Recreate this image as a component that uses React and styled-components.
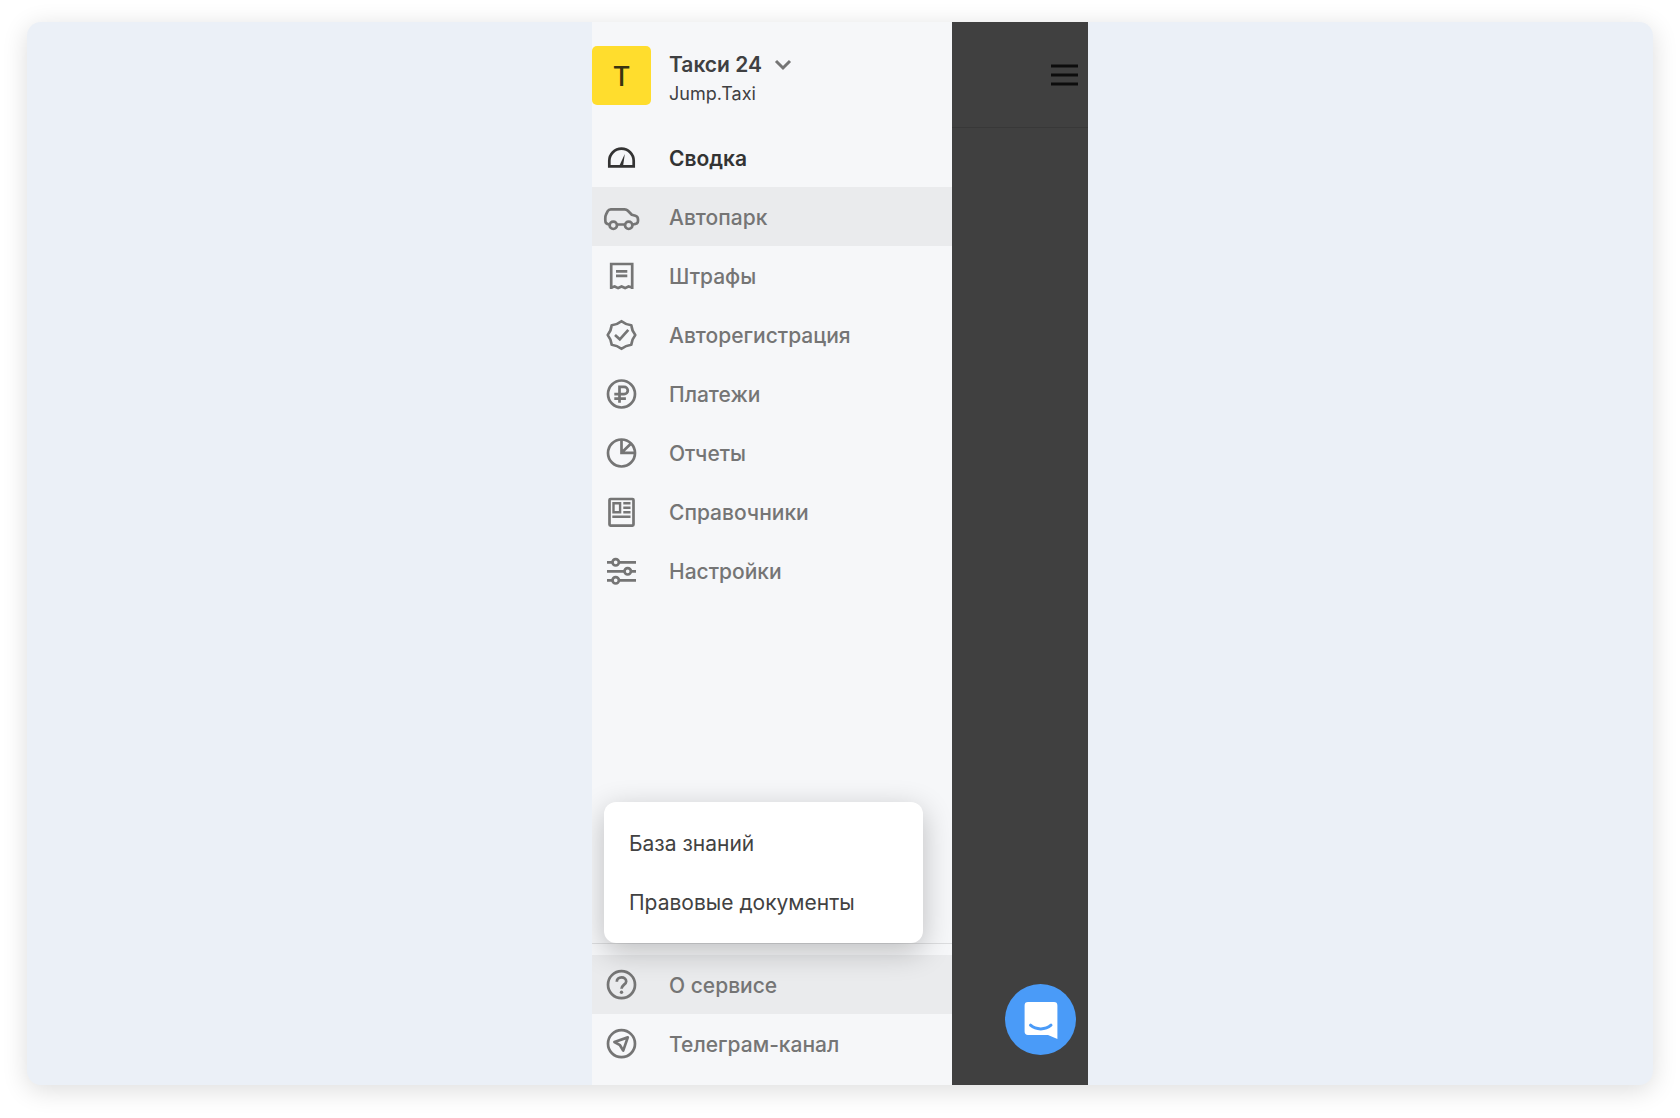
import React from 'react';
import styled, { createGlobalStyle } from 'styled-components';

const GlobalStyle = createGlobalStyle`
  * {
    box-sizing: border-box;
  }
  body {
    background: #fff;
    color: #3f4042;
    font-family: Inter, "Liberation Sans", sans-serif;
    margin: 0;
  }
  button {
    background: none;
    border: 0;
    color: inherit;
    cursor: pointer;
    font: inherit;
    padding: 0;
  }
`;

const Page = styled.div`
  display: flex;
  min-height: 100vh;
  padding: 22px 27px 33px;
`;

const Card = styled.div`
  background: #ebf0f7;
  border-radius: 14px;
  box-shadow: 0 5px 26px rgba(0, 0, 0, 0.14);
  display: flex;
  flex-grow: 1;
  justify-content: center;
`;

const Phone = styled.div`
  display: flex;
  flex-basis: 496px;
`;

const Sidebar = styled.aside`
  background: #f6f7f9;
  display: flex;
  flex: 0 0 360px;
  flex-direction: column;
  overflow: hidden;
`;

const Account = styled.header`
  display: flex;
  gap: 18px;
  padding: 24px 0 23px;
`;

const Avatar = styled.div`
  align-items: center;
  background: #ffdd2d;
  border-radius: 5px;
  color: #39330f;
  display: flex;
  font-size: 27px;
  font-weight: 500;
  height: 59px;
  justify-content: center;
  padding-top: 2px;
  width: 59px;
`;

const AccountInfo = styled.div`
  display: flex;
  flex-direction: column;
  gap: 4px;
  padding-top: 5px;
`;

const AccountSwitch = styled.button`
  align-items: center;
  display: flex;
  font-size: 21px;
  font-weight: 600;
  gap: 12px;
  line-height: 28px;
`;

const AccountProduct = styled.div`
  font-size: 18px;
  line-height: 22px;
`;

const Nav = styled.nav`
  display: flex;
  flex-direction: column;
`;

const Footer = styled.div`
  border-top: 1px solid #dcdddf;
  margin-top: auto;
  padding: 11px 0 12px;
  position: relative;
`;

const NavItem = styled.a`
  align-items: center;
  background: ${({ $highlighted }) => ($highlighted ? '#eaebed' : 'transparent')};
  color: ${({ $active }) => ($active ? '#333' : '#757575')};
  display: flex;
  font-size: 21px;
  font-weight: ${({ $active }) => ($active ? 600 : 500)};
  gap: 18px;
  height: 59px;
  text-decoration: none;

  span {
    line-height: 28px;
    padding-top: 2px;
  }
`;

const NavIcon = styled.svg`
  fill: none;
  height: 59px;
  stroke: currentColor;
  stroke-width: 2.7;
  width: 59px;
`;

const Popup = styled.div`
  background: #fff;
  border-radius: 12px;
  bottom: 142px;
  box-shadow: 0 8px 30px rgba(0, 0, 0, 0.24);
  display: flex;
  flex-direction: column;
  left: 12px;
  padding: 12px 0 11px;
  position: absolute;
  width: 319px;
`;

const PopupLink = styled.a`
  color: #424242;
  font-size: 21px;
  line-height: 59px;
  padding: 0 25px;
  text-decoration: none;
`;

const Backdrop = styled.main`
  background: #404040;
  display: flex;
  flex-direction: column;
  flex-grow: 1;
  justify-content: space-between;
`;

const TopBar = styled.div`
  align-items: center;
  border-bottom: 1px solid #383838;
  display: flex;
  height: 106px;
  justify-content: flex-end;
  padding-right: 10px;
`;

const MenuButton = styled.button`
  display: flex;
`;

const ChatButton = styled.button`
  align-self: flex-end;
  background: #4a9bf8;
  border-radius: 50%;
  display: flex;
  height: 71px;
  margin: 0 12px 30px;
  width: 71px;
`;

// eight-lobed badge outline
const polar = (step, r) => {
  const angle = (step * Math.PI) / 8;
  return `${29.5 + r * Math.sin(angle)} ${30 - r * Math.cos(angle)}`;
};
const badge = [1, 3, 5, 7, 9, 11, 13, 15]
  .map(step => `Q${polar(step, 11.2)} ${polar(step + 1, 13.8)}`)
  .join('');

const icons = {
  summary: (
    <>
      <path d="M17.3 38.4v-5.6a12.2 12.2 0 0 1 24.4 0v5.6z" />
      <path d="M32.8 26 31 38.5h-4z" fill="currentColor" stroke="none" />
    </>
  ),
  cars: (
    <>
      <path d="M17.3 37.5c-2.6-.3-4-1.7-4-4v-2.3c0-1.5.2-2.6.9-4l1.5-3c.7-1.3 1.6-1.9 3.1-1.9h13.8c1.4 0 2.3.4 3.3 1.4l3.9 4 3.6 1c1.8.5 2.6 1.8 2.6 3.7v1.7c0 2.100-1.300 3.200-5.200 3.400M25.300 37.500h7.600" strokeLinejoin="round" />
      <circle cx="21.3" cy="38.3" r="3.7" />
      <circle cx="36.7" cy="38.3" r="3.7" />
    </>
  ),
  fines: (
    <>
      <path d="M19.2 43V18h21v25M19.2 41.5l3.5-1 3.4 1.6 3.5-1.6 3.5 1.6 3.4-1.6 3.7 1" />
      <path d="M24 25.3h11.3M24 29.8h11.3" />
    </>
  ),
  registration: (
    <>
      <path d={`M${polar(0, 13.8)}${badge}z`} strokeLinejoin="round" />
      <path d="m23 30 4.8 4.3 8.5-9.5" />
    </>
  ),
  payments: (
    <>
      <circle cx="29.5" cy="30" r="13.5" />
      <path d="M27.5 38.8v-16h4.6a3.7 3.7 0 0 1 0 7.4h-9.8M22.3 34.6h11.6" />
    </>
  ),
  reports: (
    <>
      <circle cx="29.5" cy="30" r="13.5" />
      <path d="M29.5 17v12.8h13M30 29.3l8.8-8.6" />
    </>
  ),
  directories: (
    <>
      <rect x="17.5" y="17" width="24" height="26.6" rx="1" />
      <path d="M21.5 21.2h6.6v9h-6.6zM31.3 21.2h7.2M31.3 25.7h7.2M31.3 30.3h7.2M20.3 34.8h18.2" strokeWidth="2.4" />
    </>
  ),
  settings: (
    <>
      <path d="M15 21.3h5.5M27 21.3h17M15 30.3h17.5M39 30.3h5M15 39.3h5.5M27 39.3h17" />
      <circle cx="23.7" cy="21.3" r="3.2" />
      <circle cx="35.7" cy="30.3" r="3.2" />
      <circle cx="23.7" cy="39.3" r="3.2" />
    </>
  ),
  about: (
    <>
      <circle cx="29.5" cy="29.7" r="13.5" />
      <path d="M24.8 26.7c0-2.6 2-4.3 4.7-4.3s4.7 1.6 4.7 4c0 3-4.7 3.6-4.7 7.4" />
      <circle cx="29.5" cy="37.3" r="1.7" fill="currentColor" stroke="none" />
    </>
  ),
  telegram: (
    <>
      <circle cx="29.5" cy="29.7" r="13.5" />
      <path d="m22.4 28 13.4-4.6-4.6 13.2-3.2-5.4z" strokeLinejoin="round" />
    </>
  ),
};

const menu = [
  { icon: 'summary', title: 'Сводка', active: true },
  { icon: 'cars', title: 'Автопарк', highlighted: true },
  { icon: 'fines', title: 'Штрафы' },
  { icon: 'registration', title: 'Авторегистрация' },
  { icon: 'payments', title: 'Платежи' },
  { icon: 'reports', title: 'Отчеты' },
  { icon: 'directories', title: 'Справочники' },
  { icon: 'settings', title: 'Настройки' },
];

const footerMenu = [
  { icon: 'about', title: 'О сервисе', highlighted: true },
  { icon: 'telegram', title: 'Телеграм-канал' },
];

const MenuItem = ({ icon, title, active, highlighted }) => (
  <NavItem href={`#${icon}`} $active={active} $highlighted={highlighted}>
    <NavIcon viewBox="0 0 59 59" aria-hidden="true">{icons[icon]}</NavIcon>
    <span>{title}</span>
  </NavItem>
);

const App = () => (
  <Page>
    <GlobalStyle />
    <Card>
      <Phone>
        <Sidebar>
          <Account>
            <Avatar>Т</Avatar>
            <AccountInfo>
              <AccountSwitch type="button">
                Такси 24
                <svg width="18" height="12" viewBox="0 0 18 12" fill="none" stroke="#757575" strokeWidth="3" aria-hidden="true">
                  <path d="m2 2 7 7 7-7" />
                </svg>
              </AccountSwitch>
              <AccountProduct>Jump.Taxi</AccountProduct>
            </AccountInfo>
          </Account>
          <Nav>
            {menu.map(item => <MenuItem key={item.icon} {...item} />)}
          </Nav>
          <Footer>
            <Popup>
              <PopupLink href="#knowledge">База знаний</PopupLink>
              <PopupLink href="#legal">Правовые документы</PopupLink>
            </Popup>
            <Nav>
              {footerMenu.map(item => <MenuItem key={item.icon} {...item} />)}
            </Nav>
          </Footer>
        </Sidebar>
        <Backdrop>
          <TopBar>
            <MenuButton type="button" aria-label="Меню">
              <svg width="27" height="22" viewBox="0 0 27 22" stroke="#0c0c0c" strokeWidth="3">
                <path d="M0 2h27M0 11h27M0 20h27" />
              </svg>
            </MenuButton>
          </TopBar>
          <ChatButton type="button" aria-label="Чат">
            <svg width="71" height="71" viewBox="0 0 71 71">
              <path d="M23 18h26a3.4 3.4 0 0 1 3.4 3.4V55L43 51H23a3.4 3.4 0 0 1-3.4-3.4V21.4A3.4 3.4 0 0 1 23 18z" fill="#fff" />
              <path d="M25.5 41.2c5.5 4.9 15 4.9 20.5 0" fill="none" stroke="#4a9bf8" strokeWidth="3" strokeLinecap="round" />
            </svg>
          </ChatButton>
        </Backdrop>
      </Phone>
    </Card>
  </Page>
);

export default App;
